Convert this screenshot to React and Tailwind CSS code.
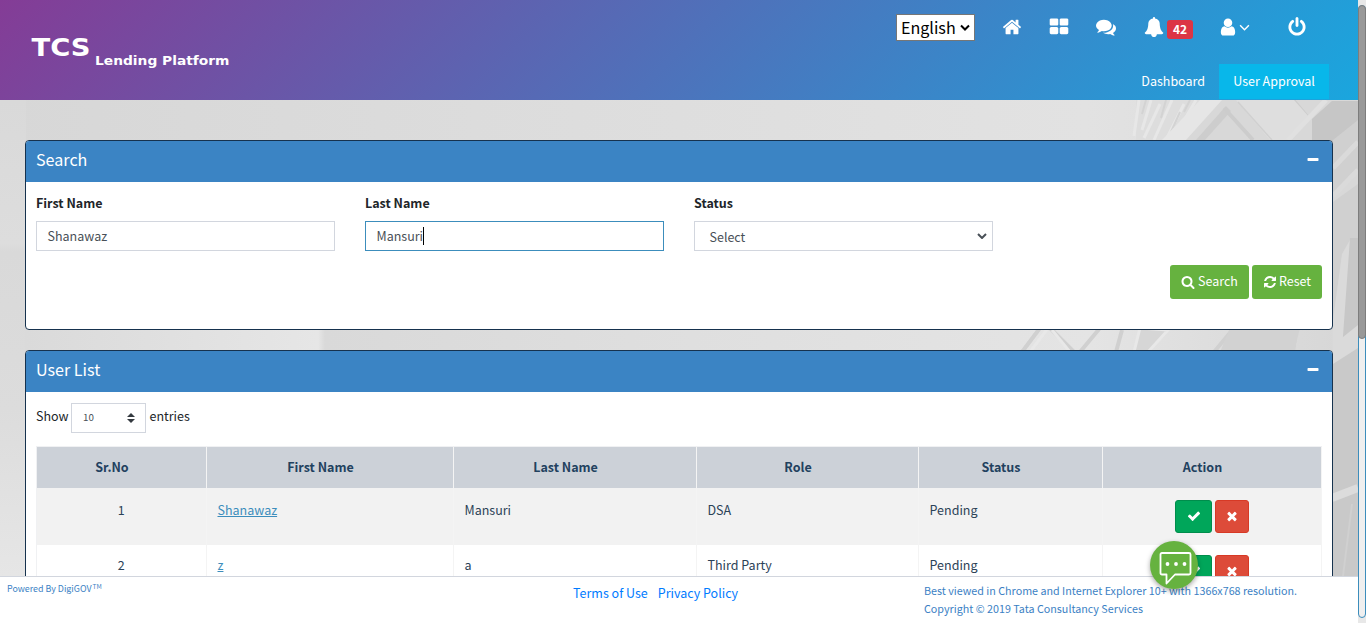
import React from "react";

const PATHS = {
  home: "M1472 992v480q0 26-19 45t-45 19h-384v-384h-256v384h-384q-26 0-45-19t-19-45v-480q0-1 .5-3t.5-3l575-474 575 474q1 2 1 6zm223-69l-62 74q-8 9-21 11h-3q-13 0-21-7l-692-577-692 577q-12 8-24 7-13-2-21-11l-62-74q-8-10-7-23.5t11-21.5l719-599q32-26 76-26t76 26l244 204v-195q0-14 9-23t23-9h192q14 0 23 9t9 23v408l219 182q10 8 11 21.5t-7 23.5z",
  grid: "M832 1024v384q0 52-38 90t-90 38h-512q-52 0-90-38t-38-90v-384q0-52 38-90t90-38h512q52 0 90 38t38 90zm0-768v384q0 52-38 90t-90 38h-512q-52 0-90-38t-38-90v-384q0-52 38-90t90-38h512q52 0 90 38t38 90zm896 768v384q0 52-38 90t-90 38h-512q-52 0-90-38t-38-90v-384q0-52 38-90t90-38h512q52 0 90 38t38 90zm0-768v384q0 52-38 90t-90 38h-512q-52 0-90-38t-38-90v-384q0-52 38-90t90-38h512q52 0 90 38t38 90z",
  comments: "M1408 768q0 139-94 257t-256.5 186.5-353.5 68.5q-86 0-176-16-124 88-278 128-36 9-86 16h-3q-11 0-20.5-8t-11.5-21q-1-3-1-6.5t.5-6.5 2-6l2.5-5 3.5-5.5 4-5 4.5-5 4-4.5q5-6 23-25t26-29.5 22.5-29 25-38.5 20.5-44q-124-72-195-177t-71-224q0-139 94-257t256.5-186.5 353.5-68.5 353.5 68.5 256.5 186.5 94 257zm384 256q0 120-71 224.5t-195 176.5q10 24 20.5 44t25 38.5 22.5 29 26 29.5 23 25q1 1 4 4.5t4.5 5 4 5 3.5 5.5l2.5 5 2 6 .5 6.5-1 6.5q-3 14-13 22t-22 7q-50-7-86-16-154-40-278-128-90 16-176 16-271 0-472-132 58 4 88 4 161 0 309-45t264-129q125-92 192-212t67-254q0-77-23-152 129 71 204 178t75 230z",
  bell: "M1728 1408q0 52-38 90t-90 38h-448q0 106-75 181t-181 75-181-75-75-181h-448q-52 0-90-38t-38-90q50-42 91-88t85-119.5 74.5-158.5 50-206 19.5-260q0-152 117-282.5t307-158.5q-8-19-8-39 0-40 28-68t68-28 68 28 28 68q0 20-8 39 190 28 307 158.5t117 282.5q0 139 19.5 260t50 206 74.5 158.5 85 119.5 91 88z",
  user: "M1536 1399q0 109-62.5 187t-150.5 78h-854q-88 0-150.5-78t-62.5-187q0-85 8.5-160.5t31.5-152 58.5-131 94-89 134.5-34.5q131 128 313 128t313-128q76 0 134.5 34.5t94 89 58.5 131 31.5 152 8.5 160.5zm-256-887q0 159-112.5 271.5t-271.5 112.5-271.5-112.5-112.5-271.5 112.5-271.5 271.5-112.5 271.5 112.5 112.5 271.5z",
  power: "M1664 896q0 156-61 298t-164 245-245 164-298 61-298-61-245-164-164-245-61-298q0-182 80.5-343t226.5-270q43-32 95.5-25t83.5 50q32 42 24.5 94.5t-49.5 84.5q-98 74-151.5 181t-53.5 228q0 104 40.5 198.5t109.5 163.5 163.5 109.5 198.5 40.5 198.5-40.5 163.5-109.5 109.5-163.5 40.5-198.5q0-121-53.5-228t-151.5-181q-42-32-49.5-84.5t24.5-94.5q31-43 84-50t95 25q146 109 226.5 270t80.5 343zm-640-768v640q0 52-38 90t-90 38-90-38-38-90v-640q0-52 38-90t90-38 90 38 38 90z",
  search: "M1216 832q0-185-131.5-316.5t-316.5-131.5-316.5 131.5-131.5 316.5 131.5 316.5 316.5 131.5 316.5-131.5 131.5-316.5zm512 832q0 52-38 90t-90 38q-54 0-90-38l-343-342q-179 124-399 124-143 0-273.5-55.5t-225-150-150-225-55.5-273.5 55.5-273.5 150-225 225-150 273.5-55.5 273.5 55.5 225 150 150 225 55.5 273.5q0 220-124 399l343 343q37 37 37 90z",
  refresh: "M1639 1056q0 5-1 7-64 268-268 434.5t-478 166.5q-146 0-282.5-55t-243.5-157l-129 129q-19 19-45 19t-45-19-19-45v-448q0-26 19-45t45-19h448q26 0 45 19t19 45-19 45l-137 137q71 66 161 102t187 36q134 0 250-65t186-179q11-17 53-117 8-23 30-23h192q13 0 22.5 9.5t9.5 22.5zm25-800v448q0 26-19 45t-45 19h-448q-26 0-45-19t-19-45 19-45l138-138q-148-137-349-137-134 0-250 65t-186 179q-11 17-53 117-8 23-30 23h-199q-13 0-22.5-9.5t-9.5-22.5v-7q65-268 270-434.5t480-166.5q146 0 284 55.5t245 156.5l130-129q19-19 45-19t45 19 19 45z",
  check: "M1671 566q0 40-28 68l-724 724-136 136q-28 28-68 28t-68-28l-136-136-362-362q-28-28-28-68t28-68l136-136q28-28 68-28t68 28l294 295 656-657q28-28 68-28t68 28l136 136q28 28 28 68z",
  times: "M1490 1322q0 40-28 68l-136 136q-28 28-68 28t-68-28l-294-294-294 294q-28 28-68 28t-68-28l-136-136q-28-28-28-68t28-68l294-294-294-294q-28-28-28-68t28-68l136-136q28-28 68-28t68 28l294 294 294-294q28-28 68-28t68 28l136 136q28 28 28 68t-28 68l-294 294 294 294q28 28 28 68z",
  minus: "M1600 736v192q0 40-28 68t-68 28h-1216q-40 0-68-28t-28-68v-192q0-40 28-68t68-28h1216q40 0 68 28t28 68z",
};

function Icon({ name, className }) {
  return (
    <svg viewBox="0 0 1792 1792" fill="currentColor" className={"shrink-0 " + className}>
      <path d={PATHS[name]} />
    </svg>
  );
}

function Chevron({ className, width = 2 }) {
  return (
    <svg viewBox="0 0 10 6" fill="none" stroke="currentColor" strokeWidth={width} className={"shrink-0 " + className}>
      <path d="M1 1l4 4 4-4" />
    </svg>
  );
}

function Header() {
  return (
    <header className="flex h-[100px] shrink-0 justify-between bg-[linear-gradient(135deg,#843c96_0%,#1aa6de_100%)] pl-[30px] pr-[29px] text-white">
      <svg viewBox="0 0 202 36" className="mt-[34px] h-9 w-[202px]" fill="#fff" fontFamily="'DejaVu Sans', sans-serif" fontWeight="bold">
        <text x="1.500" y="22" fontSize="24" textLength="59" lengthAdjust="spacingAndGlyphs">TCS</text>
        <text x="65" y="31" fontSize="12" textLength="134.500" lengthAdjust="spacingAndGlyphs">Lending Platform</text>
      </svg>
      <div className="flex flex-col items-end">
        <div className="flex h-[55px] items-center pb-px pr-[22px]">
          <div className="mt-px flex h-[27px] w-[79px] items-center justify-between border border-[#767676] bg-white pl-1 pr-1 text-[16.1px] leading-6 text-black">
            <span className="-mt-[2px]">English</span>
            <Chevron className="-mt-px h-[7px] w-[10px]" width={2} />
          </div>
          <Icon name="home" className="ml-[27px] size-5" />
          <Icon name="grid" className="-mt-px ml-[27px] size-5" />
          <Icon name="comments" className="ml-[27px] size-5" />
          <Icon name="bell" className="ml-[28px] size-5" />
          <span className="ml-[3px] mt-[5px] h-[19px] w-[26px] rounded-[3px] bg-[#dc3545] text-center text-[12px] font-bold leading-[18px]">42</span>
          <Icon name="user" className="ml-[25px] size-5" />
          <Chevron className="ml-[1px] mt-px h-[7px] w-[11px]" width={1.3} />
          <Icon name="power" className="-mt-px ml-[37px] size-5" />
        </div>
        <nav className="mt-[9px] flex h-[35px] items-center text-[12.5px]">
          <span className="mr-[14px]">Dashboard</span>
          <span className="flex h-[35px] w-[110px] items-center justify-center bg-[#08b7ea]">User Approval</span>
        </nav>
      </div>
    </header>
  );
}

/* Soft grey photograph of an office block behind the panels */
function Backdrop() {
  return (
    <svg viewBox="0 100 1358 476" preserveAspectRatio="none" className="absolute inset-0 h-full w-full">
      <defs>
        <linearGradient id="sky" x1="0" x2="1">
          <stop offset="0" stopColor="#d7d7d7" />
          <stop offset="0.35" stopColor="#dcdcdc" />
          <stop offset="0.8" stopColor="#e2e2e2" />
          <stop offset="1" stopColor="#dadada" />
        </linearGradient>
        <linearGradient id="mist" x1="0" y1="0" x2="0" y2="1">
          <stop offset="0" stopColor="#d9d9d9" />
          <stop offset="0.3" stopColor="#dddddd" />
          <stop offset="0.32" stopColor="#d9d9d9" />
          <stop offset="0.65" stopColor="#dcdcdc" />
          <stop offset="1" stopColor="#e6e6e6" />
        </linearGradient>
        <linearGradient id="low" x1="0" x2="1">
          <stop offset="0" stopColor="#dadada" />
          <stop offset="0.22" stopColor="#e6e6e6" />
          <stop offset="0.225" stopColor="#d9d9d9" />
          <stop offset="0.5" stopColor="#dfdfdf" />
          <stop offset="0.8" stopColor="#e4e4e4" />
          <stop offset="1" stopColor="#d6d6d6" />
        </linearGradient>
      </defs>
      <rect y="100" width="1358" height="476" fill="url(#sky)" />
      <rect y="100" width="26" height="476" fill="url(#mist)" />
      <rect x="25" y="325" width="1333" height="30" fill="url(#low)" />
      <path d="M1136 100h82l-36 40h-46z" fill="#dddddd" />
      <path d="M1139 100l-5 36M1151 100l-9 30M1160 104l-16 34M1172 100l-18 40M1184 104l-18 36M1196 100l-14 24" stroke="#e7e7e7" strokeWidth="3" fill="none" />
      <path d="M1146 100l-4 14M1166 100l-5 18M1180 112l-9 20M1190 100l-6 12" stroke="#d3d3d3" strokeWidth="2" fill="none" />
      <path d="M1214 100h144v476h-26V140h-154z" fill="#d8d8d8" />
      <path d="M1200 100h22l-36 40h-24z" fill="#e6e6e6" />
      <path d="M1226 106l-30 34h9l26-29z" fill="#cdcdcd" />
      <path d="M1224 108l29 32M1293 100l17 20" stroke="#cccccc" strokeWidth="4" fill="none" />
      <path d="M1244 100h50l16 18-22 22h-18l-34-40z" fill="#dedede" />
      <path d="M1238 102l34 38" stroke="#d0d0d0" strokeWidth="1.500" />
      <path d="M1326 100l-38 40" stroke="#e0e0e0" strokeWidth="5" />
      <path d="M1312 119l20-18h26v30l-20 12h-26z" fill="#c6c6c6" />
      <path d="M1333 140l25-20v52l-25 20z" fill="#d0d0d0" />
      <path d="M1333 168l25-26M1333 196l25-26" stroke="#dadada" strokeWidth="5" />
      <path d="M1333 202l25-18v62l-16 24-9 50z" fill="#d0d0d0" />
      <path d="M1333 320l9-66 9-16-5 112h-13z" fill="#dadada" />
      <path d="M1350 238h8v112h-16z" fill="#c7c7c7" />
      <path d="M1040 328l-18 24M1074 352l-24-24M1100 328l-20 24M1122 330l-6 22M1234 328l-20 24M1296 329l-3 23" stroke="#d0d0d0" strokeWidth="4" />
      <path d="M1048 328l-18 24M1052 330l18 22M1140 328l-6 24h14l20-22z" stroke="#e8e8e8" strokeWidth="3" fill="#d6d6d6" />
      <path d="M1230 328h70l-6 24h-74z" fill="#d2d2d2" />
      <path d="M1333 345l25-20v24l-25 16z" fill="#dadada" />
      <path d="M1333 364l25-16v228h-25z" fill="#c9c9c9" />
      <path d="M1332 498l26-10" stroke="#dcdcdc" strokeWidth="8" />
      <path d="M1352 504l-9 72" stroke="#d0d0d0" strokeWidth="2" />
    </svg>
  );
}

function Panel({ title, className, children }) {
  return (
    <section className={"relative rounded-[4px] border border-[#16324e] bg-white " + className}>
      <div className="flex h-[41px] items-center justify-between rounded-t-[3px] bg-[#3b84c4] px-[10px] text-white">
        <h2 className="pb-[5px] text-[16.1px] leading-6">{title}</h2>
        <Icon name="minus" className="mb-[3px] mr-[2.5px] size-[14px]" />
      </div>
      {children}
    </section>
  );
}

function Field({ label, children }) {
  return (
    <label className="block w-[299px]">
      <span className="block text-[12.5px] font-bold leading-5 text-[#212529]">{label}</span>
      {children}
    </label>
  );
}

const ROWS = [
  { no: 1, first: "Shanawaz", last: "Mansuri", role: "DSA", status: "Pending" },
  { no: 2, first: "z", last: "a", role: "Third Party", status: "Pending" },
];

const COLS = "grid grid-cols-[170px_247px_243px_222px_184px_219px]";

function UserTable() {
  return (
    <div className="ml-[10px] mt-[13px] w-[1286px] border-l border-t border-[#f0f1f3] text-[12.5px] leading-5 text-[#2c4257]">
      <div className={COLS + " h-[41px] bg-[#ccd1d8] font-bold text-[#22415f]"}>
        {["Sr.No", "First Name", "Last Name", "Role", "Status", "Action"].map((h) => (
          <div key={h} className="border-r border-[#f4f4f4] pl-[11px] pr-[30px] pt-[10px] text-center">{h}</div>
        ))}
      </div>
      {ROWS.map((r) => (
        <div key={r.no} className={COLS + " h-[55px] odd:bg-white even:h-[57px] even:bg-[#f2f2f2] *:border-r *:border-[#f4f4f4] *:pl-[10.5px] odd:*:pt-[10px] even:*:pt-3"}>
          <div className="pr-[11px] text-center">{r.no}</div>
          <div><a className="text-[#3c8dbc] underline">{r.first}</a></div>
          <div>{r.last}</div>
          <div>{r.role}</div>
          <div>{r.status}</div>
          <div className="flex justify-center gap-[3px] pr-[10.5px]">
            <span className="flex h-[33px] w-[37px] items-center justify-center rounded-[3px] border border-[#008d4c] bg-[#00a65a] pb-px text-white"><Icon name="check" className="size-[14px]" /></span>
            <span className="flex h-[33px] w-[34px] items-center justify-center rounded-[3px] border border-[#d73925] bg-[#dd4b39] pb-px text-white"><Icon name="times" className="size-[14px]" /></span>
          </div>
        </div>
      ))}
    </div>
  );
}

export default function App() {
  return (
    <div className="relative flex h-[623px] w-[1366px] overflow-hidden bg-white font-['Noto_Sans_CJK_SC',sans-serif]">
      <div className="flex w-[1358px] flex-col">
        <Header />
        <main className="relative h-[476px] overflow-hidden px-[25px] pt-10">
          <Backdrop />
          <Panel title="Search" className="h-[190px]">
            <div className="flex gap-[30px] px-[10px] pt-[11px] text-[12.5px] text-[#495057]">
              <Field label="First Name">
                <div className="mt-2 flex h-[30px] items-center border border-[#d2d6de] pl-[10.5px]">Shanawaz</div>
              </Field>
              <Field label="Last Name">
                <div className="mt-2 flex h-[30px] items-center border border-[#3c8dbc] pl-[10.5px]">Mansuri<span className="h-[18px] w-px bg-black" /></div>
              </Field>
              <Field label="Status">
                <div className="mt-2 flex h-[30px] items-center justify-between border border-[#d2d6de] pl-[14.5px] pr-[5px]"><span className="mt-[2px]">Select</span><Chevron className="h-[6px] w-[10px]" width={2} /></div>
              </Field>
            </div>
            <div className="mt-[14px] flex justify-end gap-[3px] pr-[10px] text-[12.5px] text-white">
              <button className="flex h-[34px] w-[79px] items-center justify-center gap-[3px] rounded-[3px] bg-[#66b23f] pb-[2px]"><Icon name="search" className="mt-px size-[14px]" />Search</button>
              <button className="flex h-[34px] w-[70px] items-center justify-center gap-[2px] rounded-[3px] bg-[#66b23f] pb-[2px]"><Icon name="refresh" className="mt-px size-[14px]" />Reset</button>
            </div>
          </Panel>
          <Panel title="User List" className="mt-5 h-[400px]">
            <div className="flex items-center px-[10px] pt-[11px] text-[12.5px] text-[#212529]">
              <span className="mb-[3px] w-[35px]">Show</span>
              <div className="flex h-[30px] w-[75px] items-center justify-between border border-[#d2d6de] pl-[11px] pr-[10px] text-[9.8px] text-[#495057]">
                <span className="-mt-[2px]">10</span>
                <svg viewBox="0 0 8 10" className="h-[10px] w-2" fill="#343a40"><path d="M4 0l4 4H0zM4 10l4-4H0z" /></svg>
              </div>
              <span className="mb-[3px] ml-[3.5px]">entries</span>
            </div>
            <UserTable />
          </Panel>
        </main>
        <footer className="flex h-[47px] shrink-0 border-t border-[#d2d6de] bg-white text-[#3b7fc4]">
          <div className="w-[573px] pl-[7px] pt-[4px] text-[8.9px] leading-4">Powered By DigiGOV<sup className="ml-px text-[6.5px]">TM</sup></div>
          <div className="flex w-[351px] gap-[10px] pt-[6px] text-[12.5px] leading-5 text-[#007bff]"><span>Terms of Use</span><span>Privacy Policy</span></div>
          <div className="pt-[5px] text-[10.74px] leading-[18px]">
            <p>Best viewed in Chrome and Internet Explorer 10+ with 1366x768 resolution.</p>
            <p>Copyright © 2019 Tata Consultancy Services</p>
          </div>
        </footer>
      </div>
      <div className="h-full w-2 bg-[#e8e8e8] pt-[5px]">
        <div className="h-[613px] rounded-[4px] border border-[#3c8dbc] bg-[#efefef]">
          <div className="-mx-px -mt-px h-[334px] rounded-[4px] border border-[#7d7d7d] bg-[#999]" />
        </div>
      </div>
      <div className="absolute left-[1150px] top-[541px] flex size-12 items-center justify-center rounded-full bg-[#66b23f] shadow-[0_2px_5px_rgba(0,0,0,0.35)]">
        <svg viewBox="0 0 34 34" className="ml-[4px] mt-[5px] size-[34px]" fill="none" stroke="#fff" strokeWidth="1.800" strokeLinejoin="round">
          <path d="M3 2h27q1.500 0 1.500 1.500v18.500q0 1.500-1.500 1.500H16l-8.500 9v-9H3q-1.500 0-1.500-1.500V3.500Q1.500 2 3 2z" />
          <g fill="#fff" stroke="none"><circle cx="8.500" cy="13" r="1.900" /><circle cx="17" cy="13" r="1.900" /><circle cx="25.500" cy="13" r="1.900" /></g>
        </svg>
      </div>
    </div>
  );
}
